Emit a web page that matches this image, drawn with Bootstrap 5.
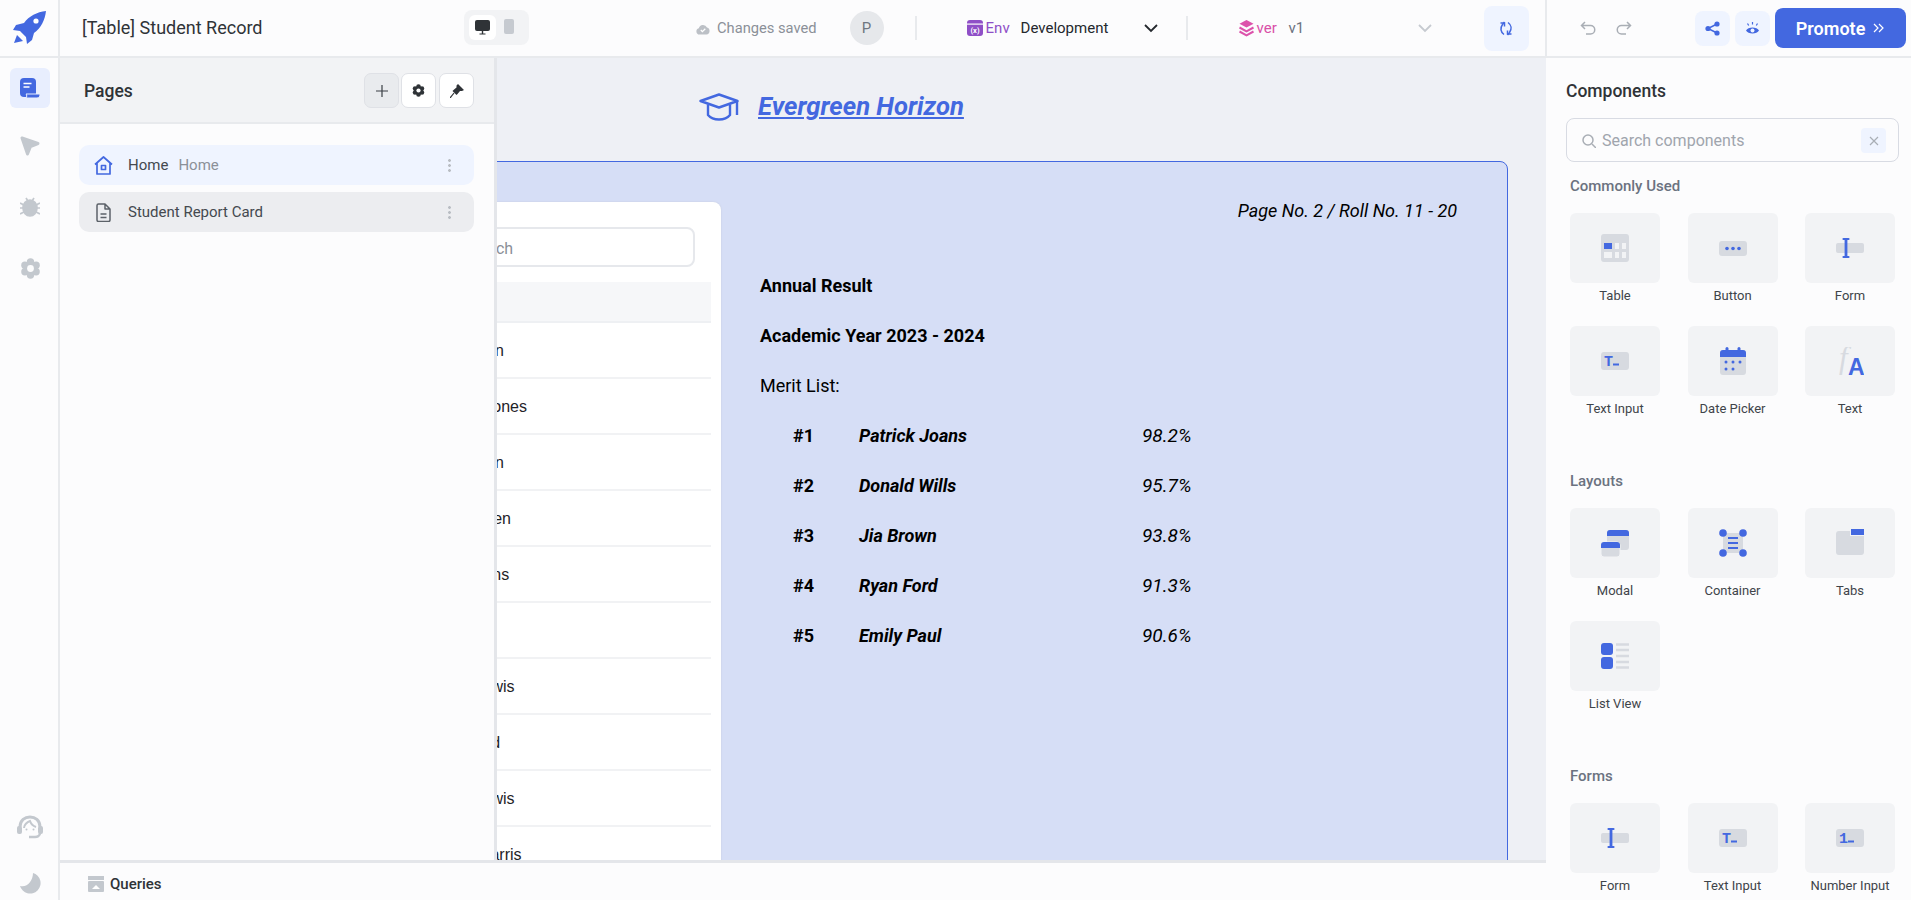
<!DOCTYPE html>
<html lang="en">
<head>
<meta charset="UTF-8">
<meta name="viewport" content="width=device-width, initial-scale=1.0">
<title>[Table] Student Record</title>
<link href="https://cdn.jsdelivr.net/npm/bootstrap@5.3.0/dist/css/bootstrap.min.css" rel="stylesheet">
<style>
body { font-family: Roboto, "Liberation Sans", sans-serif; background: #fcfcfd; color: #2f3337; height: 900px; overflow: hidden; }
.app-top { height: 58px; border-bottom: 2px solid #e8eaed; }
.logo-cell { width: 60px; border-right: 2px solid #e8eaed; padding: 11px 0 0 13px; }
.page-title { font-size: 18px; margin-left: 22px; width: 382px; padding-bottom: 2px; }
.device-toggle { width: 65px; height: 35px; background: #f2f3f5; border-radius: 8px; padding: 5px; margin-top: 10px; }
.device-on { width: 27px; height: 25px; background: #fff; border-radius: 6px; }
.top-tools { margin-left: 167px; }
.saved-text { font-size: 14.7px; color: #8b9098; margin-left: 7px; }
.avatar { width: 34px; height: 34px; border-radius: 50%; background: #e6e8eb; color: #6e7680; font-size: 15px; margin-left: 33px; }
.top-rule { width: 2px; height: 24px; background: #e8eaed; }
.rule-env { margin: 0 50px 0 31px; }
.rule-ver { margin: 0 51px 0 28px; }
.env-label { font-size: 15px; color: #8f4fc7; width: 35px; margin-left: 3px; }
.env-value { font-size: 15px; color: #24282d; width: 123px; }
.ver-label { font-size: 15px; color: #d94fa8; width: 32px; margin-left: 3px; }
.ver-value { font-size: 15px; color: #6b7280; width: 129px; }
.soft-btn { background: #eff4ff; border-radius: 8px; }
.sync-btn { width: 45px; height: 45px; margin-left: 52px; }
.action-tools { margin-left: 16px; border-left: 2px solid #e8eaed; padding-left: 33px; flex: 1; }
.redo-icon { margin-left: 20px; }
.share-btn { width: 35px; height: 35px; margin-left: 63px; }
.eye-btn { width: 35px; height: 35px; margin-left: 5px; }
.promote-btn { width: 131px; height: 40px; background: #4368e0; color: #fff; border-radius: 8px; font-size: 18px; font-weight: 600; margin-left: 5px; }
.app-main { height: 842px; }
.side-rail { width: 60px; border-right: 2px solid #e8eaed; padding-top: 10px; }
.rail-item { width: 40px; height: 40px; margin-left: 10px; border-radius: 6px; margin-bottom: 21px; }
.rail-on { background: #e8eefe; margin-bottom: 18px; }
.rail-help { margin-bottom: 16px; }
.rail-moon { margin-bottom: -3px; }
.mid-col { width: 1486px; position: relative; }
.canvas-area { height: 802px; background: #eef0f5; overflow: hidden; }
.brand-row { height: 103px; padding: 0 0 6px 639px; gap: 19px; }
.brand-name { font-size: 25.6px; font-weight: 700; font-style: italic; color: #4368e0; text-decoration: underline; }
.sheet { margin-left: 95px; width: 1353px; height: 900px; background: #d6def6; border: 1px solid #4368e0; border-radius: 8px 8px 0 0; padding: 40px 40px 0 40px; }
.table-card { width: 525px; height: 800px; background: #fff; border-radius: 8px; padding: 25px 10px 0 10px; box-shadow: 0 0 2px #c6cbdc; }
.table-search { margin: 0 16px 15px auto; height: 40px; width: 270px; border: 2px solid #e6e8ec; border-radius: 8px; font-size: 16px; color: #8a8f98; padding: 8px 10px 6px 37px; }
.rec-head { height: 41px; background: #f6f7f9; border-bottom: 2px solid #eef0f3; font-size: 14px; color: #6b7280; }
.rec-row { height: 56px; padding-top: 2px; border-bottom: 2px solid #f1f2f4; font-family: "Liberation Sans", sans-serif; font-size: 16px; color: #1f2328; white-space: nowrap; }
.rec-roll { width: 208px; padding-left: 12px; }
.result-col { padding: 0 0 0 39px; color: #000; font-size: 18px; }
.result-page { height: 59px; line-height: 17px; padding-right: 10px; font-style: italic; }
.result-line { height: 50px; line-height: 50px; }
.merit-rank { width: 66px; margin-left: 33px; font-weight: 700; }
.merit-name { width: 283px; font-weight: 700; font-style: italic; }
.merit-pct { font-style: italic; font-size: 19px; }
.pages-panel { position: absolute; left: 0; top: 0; width: 437px; height: 802px; background: #fcfcfd; border-right: 3px solid #e4e6ea; }
.panel-head { height: 66px; background: #f2f3f5; border-bottom: 2px solid #e8eaed; padding: 15px 20px 0 24px; }
.panel-name { font-size: 17.5px; font-weight: 500; padding-top: 5px; }
.mini-btn { width: 35px; height: 35px; background: #fff; border: 1px solid #dfe1e6; border-radius: 7px; }
.mini-plus { background: #e9ebee; }
.mini-gear { margin: 0 3px 0 2px; }
.page-item { height: 40px; width: 395px; margin: 0 0 7px 19px; border-radius: 10px; font-size: 15px; padding: 0 23px 0 15px; color: #44494f; }
.page-home { background: #eff4ff; margin-top: 21px; }
.page-report { background: #ecedf0; }
.page-text { margin-left: 15px; }
.page-slug { color: #8b9098; margin-left: 10px; }
.kebab { width: 3px; height: 15px; background: radial-gradient(circle, #b9bdc3 1.3px, transparent 1.5px) 0 0 / 3px 5px repeat-y; }
.query-bar { height: 40px; border-top: 3px solid #e4e6ea; padding: 5px 0 0 28px; font-size: 15px; font-weight: 500; }
.query-text { margin-left: 6px; }
.comp-panel { width: 365px; padding: 0 12px 0 20px; }
.comp-title { font-size: 17.5px; font-weight: 500; height: 60px; padding-top: 20px; }
.comp-search { height: 44px; border: 1px solid #d8dbe3; border-radius: 8px; padding: 1px 12px 0 15px; font-size: 16px; color: #a0a5ad; }
.search-text { margin-left: 6px; }
.clear-box { width: 25px; height: 25px; background: #eff4ff; border-radius: 4px; }
.comp-head { font-size: 15px; font-weight: 500; color: #6b7280; margin: 32px 0 0 4px; line-height: 20px; }
.comp-head-first { margin-top: 14px; }
.comp-grid { display: grid; grid-template-columns: repeat(3, 90px); column-gap: 27.5px; margin: 17px 0 0 4px; }
.comp-cell { height: 113px; text-align: center; font-size: 13px; color: #3f444a; }
.comp-tile { height: 70px; background: #f2f3f5; border-radius: 6px; margin-bottom: 5px; }
.comp-cell span { display: block; line-height: 16px; }
</style>
</head>
<body>
<!-- top bar -->
<div class="app-top d-flex">
    <div class="logo-cell">
        <svg width="33" height="33" viewBox="0 0 33 33"><path fill="#4368e0" d="M33 0C24 1 16 5 11 12L3 14L0 19L7 20L13 26L14 33L19 29L21 22C28 17 32 9 33 0Z"/><circle cx="23" cy="10" r="2.6" fill="#fff"/><path fill="#4368e0" d="M4 24L10 30L1 32Z"/></svg>
    </div>
    <div class="page-title align-self-center">[Table] Student Record</div>
    <div class="device-toggle d-flex">
        <div class="device-on d-flex align-items-center justify-content-center">
            <svg width="15" height="15" viewBox="0 0 15 15"><rect width="15" height="11" rx="2" fill="#2f3337"/><rect x="6.8" y="11" width="1.4" height="3" fill="#2f3337"/><rect x="4.5" y="13.5" width="6" height="1" fill="#2f3337"/></svg>
        </div>
        <svg class="ms-2 mt-1" width="10" height="15" viewBox="0 0 10 15"><rect width="10" height="15" rx="2" fill="#c6cad0"/></svg>
    </div>
    <div class="top-tools d-flex align-items-center">
        <svg width="14" height="13" viewBox="0 0 14 13"><path fill="#bcc0c6" d="M3.500 12.500A3.200 3.200 0 0 1 2.800 6.200 4.400 4.400 0 0 1 11 5.500 3.600 3.600 0 0 1 10.500 12.500Z"/><path d="M4.800 8l1.600 1.600L9.300 6.800" stroke="#fff" stroke-width="1.300" fill="none"/></svg>
        <span class="saved-text">Changes saved</span>
        <div class="avatar d-flex align-items-center justify-content-center">P</div>
        <div class="top-rule rule-env"></div>
        <svg width="16" height="16" viewBox="0 0 16 16"><rect width="16" height="16" rx="3" fill="#8f4fc7"/><rect y="3.500" width="16" height="1.200" fill="#fcfcfd"/><text x="8" y="13" font-size="7.500" font-weight="700" text-anchor="middle" fill="#fff" font-family="Roboto">(x)</text></svg>
        <span class="env-label">Env</span>
        <span class="env-value">Development</span>
        <svg width="14" height="9" viewBox="0 0 14 9"><path d="M1 1l6 6 6-6" stroke="#24282d" stroke-width="1.800" fill="none"/></svg>
        <div class="top-rule rule-ver"></div>
        <svg width="15" height="17" viewBox="0 0 15 17"><path fill="#dc52ab" d="M7.500 0l7 3.800-7 3.800-7-3.800Z"/><path d="M.5 7.500l7 3.800 7-3.800M.5 11.500l7 3.800 7-3.800" stroke="#dc52ab" stroke-width="2" fill="none"/></svg>
        <span class="ver-label">ver</span>
        <span class="ver-value">v1</span>
        <svg width="14" height="9" viewBox="0 0 14 9"><path d="M1 1l6 6 6-6" stroke="#c6cad0" stroke-width="1.800" fill="none"/></svg>
        <div class="soft-btn sync-btn d-flex align-items-center justify-content-center">
            <svg width="14" height="15" viewBox="0 0 14 15" fill="none" stroke="#4368e0" stroke-width="1.500"><path d="M5 13.500C1.500 11 1 7 3.500 3.500L5.500 1"/><path d="M9 1.500C12.500 4 13 8 10.500 11.500L8.500 14"/><path d="M1.500 2h4v3.500M12.500 13h-4V9.500"/></svg>
        </div>
    </div>
    <div class="action-tools d-flex align-items-center">
        <svg width="16" height="14" viewBox="0 0 16 14" fill="none" stroke="#a9aeb5" stroke-width="1.500"><path d="M5 1L1.500 4.500 5 8M1.500 4.500h9a4 4 0 0 1 0 8.500H6"/></svg>
        <svg class="redo-icon" width="16" height="14" viewBox="0 0 16 14" fill="none" stroke="#a9aeb5" stroke-width="1.500"><path d="M11 1l3.500 3.500L11 8M14.500 4.500h-9a4 4 0 0 0 0 8.500H10"/></svg>
        <div class="soft-btn share-btn d-flex align-items-center justify-content-center">
            <svg width="15" height="15" viewBox="0 0 15 15"><circle cx="12" cy="3" r="2.600" fill="#4368e0"/><circle cx="12" cy="12" r="2.600" fill="#4368e0"/><circle cx="3" cy="7.500" r="2.600" fill="#4368e0"/><path d="M12 3L3 7.500l9 4.500" stroke="#4368e0" stroke-width="1.500" fill="none"/></svg>
        </div>
        <div class="soft-btn eye-btn d-flex align-items-center justify-content-center">
            <svg width="15" height="15" viewBox="0 0 15 15"><path fill="#4368e0" d="M1 9.500C3 5.500 12 5.500 14 9.500 12 13.500 3 13.500 1 9.500Z"/><circle cx="7.500" cy="9.500" r="2" fill="#eff4ff"/><path d="M7.500 1v2.500M2.500 2.500l1.200 2M12.500 2.500l-1.200 2" stroke="#4368e0" stroke-width="1.200"/></svg>
        </div>
        <div class="promote-btn d-flex align-items-center justify-content-center gap-2">Promote
            <svg width="11" height="10" viewBox="0 0 11 10" fill="none" stroke="#fff" stroke-width="1.200"><path d="M1 1l4 4-4 4M6 1l4 4-4 4"/></svg>
        </div>
    </div>
</div>

<div class="app-main d-flex">
    <!-- left rail -->
    <div class="side-rail d-flex flex-column">
        <div class="rail-item rail-on d-flex align-items-center justify-content-center">
            <svg width="20" height="21" viewBox="0 0 20 21"><rect width="16" height="19" rx="4" fill="#4368e0"/><path d="M3.500 5.500h8M3.500 9h6" stroke="#fff" stroke-width="1.500"/><path d="M6 16h14c0 2.500-1 4-3 4H6c1-1 1-3 0-4Z" fill="#4368e0" stroke="#e8eefe"/></svg>
        </div>
        <div class="rail-item d-flex align-items-center justify-content-center">
            <svg width="20" height="20" viewBox="0 0 20 20"><path d="M2 2L18 7.500 10.500 10.500 7.500 18Z" fill="#c3c8ce" stroke="#c3c8ce" stroke-width="3" stroke-linejoin="round"/></svg>
        </div>
        <div class="rail-item d-flex align-items-center justify-content-center">
            <svg width="20" height="20" viewBox="0 0 20 20" stroke="#c3c8ce" stroke-width="1.700"><ellipse cx="10" cy="11" rx="7" ry="8" fill="#c3c8ce"/><path d="M6 1l2 3M14 1l-2 3M0 6l4 2M20 6l-4 2M0 11h4M20 11h-4M0 17l4-2M20 17l-4-2"/></svg>
        </div>
        <div class="rail-item d-flex align-items-center justify-content-center">
            <svg width="21" height="21" viewBox="-10.500 -10.500 21 21" fill="#c3c8ce"><circle r="7"/><circle cy="-6.500" r="3.700"/><circle cy="6.500" r="3.700"/><circle cx="5.600" cy="-3.200" r="3.700"/><circle cx="-5.600" cy="-3.200" r="3.700"/><circle cx="5.600" cy="3.200" r="3.700"/><circle cx="-5.600" cy="3.200" r="3.700"/><circle r="3.400" fill="#fcfcfd"/></svg>
        </div>
        <div class="rail-item rail-help d-flex align-items-center justify-content-center mt-auto">
            <svg width="26" height="24" viewBox="0 0 26 24" fill="none"><path d="M3 12C3 5 8 2 13 2s10 3 10 10" stroke="#c3c8ce" stroke-width="3"/><path d="M7 13c0-3 3-6 6-7 1 3 3 5 6 6" stroke="#c3c8ce" stroke-width="2"/><rect y="11" width="5" height="8" rx="2" fill="#c3c8ce"/><rect x="21" y="11" width="5" height="8" rx="2" fill="#c3c8ce"/><path d="M23 18c0 3-3 4-5 4h-6" stroke="#c3c8ce" stroke-width="2.500"/><circle cx="9.500" cy="14.500" r="1" fill="#c3c8ce"/><circle cx="16.500" cy="14.500" r="1" fill="#c3c8ce"/></svg>
        </div>
        <div class="rail-item rail-moon d-flex align-items-center justify-content-center">
            <svg width="22" height="22" viewBox="0 0 22 22"><path fill="#c3c8ce" d="M14 1A10.500 10.500 0 1 1 1 14C8 16 14 9 14 1Z"/></svg>
        </div>
    </div>

    <div class="mid-col">
        <!-- canvas -->
        <div class="canvas-area">
            <div class="brand-row d-flex align-items-center">
                <svg width="40" height="28" viewBox="0 0 40 28" fill="none" stroke="#4368e0" stroke-width="2.400" stroke-linejoin="round"><path d="M1.500 8L20 1.500 38.500 8 20 14.500Z"/><path d="M9 11.500V22c5 6 17 6 22 0V11.500"/><path d="M38 8v14"/></svg>
                <span class="brand-name">Evergreen Horizon</span>
            </div>
            <div class="sheet d-flex">
                <div class="table-card flex-shrink-0">
                    <div class="table-search">Search</div>
                    <div class="rec-head d-flex align-items-center"><div class="rec-roll">Roll No.</div><div>Name</div></div>
                    <div class="rec-row d-flex align-items-center"><div class="rec-roll">11</div><div>David Martin</div></div>
                    <div class="rec-row d-flex align-items-center"><div class="rec-roll">12</div><div>Jonathan Jones</div></div>
                    <div class="rec-row d-flex align-items-center"><div class="rec-roll">13</div><div>Maria Brown</div></div>
                    <div class="rec-row d-flex align-items-center"><div class="rec-roll">14</div><div>Robert Green</div></div>
                    <div class="rec-row d-flex align-items-center"><div class="rec-roll">15</div><div>Henry Collins</div></div>
                    <div class="rec-row d-flex align-items-center"><div class="rec-roll">16</div><div>Mia Clark</div></div>
                    <div class="rec-row d-flex align-items-center"><div class="rec-roll">17</div><div>Michael Lewis</div></div>
                    <div class="rec-row d-flex align-items-center"><div class="rec-roll">18</div><div>Patrick Ford</div></div>
                    <div class="rec-row d-flex align-items-center"><div class="rec-roll">19</div><div>Charles Lewis</div></div>
                    <div class="rec-row d-flex align-items-center"><div class="rec-roll">20</div><div>Matthew Harris</div></div>
                </div>
                <div class="result-col flex-grow-1">
                    <div class="result-page text-end">Page No. 2 / Roll No. 11 - 20</div>
                    <div class="result-line fw-bold">Annual Result</div>
                    <div class="result-line fw-bold">Academic Year 2023 - 2024</div>
                    <div class="result-line">Merit List:</div>
                    <div class="result-line d-flex"><div class="merit-rank">#1</div><div class="merit-name">Patrick Joans</div><div class="merit-pct">98.2%</div></div>
                    <div class="result-line d-flex"><div class="merit-rank">#2</div><div class="merit-name">Donald Wills</div><div class="merit-pct">95.7%</div></div>
                    <div class="result-line d-flex"><div class="merit-rank">#3</div><div class="merit-name">Jia Brown</div><div class="merit-pct">93.8%</div></div>
                    <div class="result-line d-flex"><div class="merit-rank">#4</div><div class="merit-name">Ryan Ford</div><div class="merit-pct">91.3%</div></div>
                    <div class="result-line d-flex"><div class="merit-rank">#5</div><div class="merit-name">Emily Paul</div><div class="merit-pct">90.6%</div></div>
                </div>
            </div>
        </div>

        <!-- pages panel lies over the canvas -->
        <div class="pages-panel">
            <div class="panel-head d-flex">
                <div class="panel-name flex-grow-1">Pages</div>
                <div class="mini-btn mini-plus d-flex align-items-center justify-content-center"><svg width="12" height="12" viewBox="0 0 12 12"><path d="M6 0v12M0 6h12" stroke="#3a3f45" stroke-width="1.200"/></svg></div>
                <div class="mini-btn mini-gear d-flex align-items-center justify-content-center"><svg width="13" height="13" viewBox="-10.500 -10.500 21 21" fill="#2f3337"><circle r="7"/><circle cy="-6.500" r="3.700"/><circle cy="6.500" r="3.700"/><circle cx="5.600" cy="-3.200" r="3.700"/><circle cx="-5.600" cy="-3.200" r="3.700"/><circle cx="5.600" cy="3.200" r="3.700"/><circle cx="-5.600" cy="3.200" r="3.700"/><circle r="3.400" fill="#fff"/></svg></div>
                <div class="mini-btn d-flex align-items-center justify-content-center"><svg width="14" height="14" viewBox="0 0 14 14"><path fill="#2f3337" d="M8 0l6 6-2 1-2 0-2.500 3-1 1-4-4 1-1 3-2.500 0-2Z"/><path d="M4 9L0 14" stroke="#2f3337" stroke-width="1.200"/></svg></div>
            </div>
            <div class="page-item page-home d-flex align-items-center">
                <svg width="19" height="19" viewBox="0 0 19 19" fill="none" stroke="#4368e0" stroke-width="1.700" stroke-linejoin="round"><path d="M1 8.500L9.500 1 18 8.500M3 7v11h13V7"/><rect x="7.500" y="9.500" width="4" height="4"/></svg>
                <span class="page-text">Home</span><span class="page-slug">Home</span>
                <div class="kebab ms-auto"></div>
            </div>
            <div class="page-item page-report d-flex align-items-center">
                <svg width="19" height="19" viewBox="0 0 19 19" fill="none" stroke="#5c6269" stroke-width="1.500" stroke-linejoin="round"><path d="M3 2.500a1.500 1.500 0 0 1 1.500-1.500H11l5 5v11a1.500 1.500 0 0 1-1.500 1.500h-10A1.500 1.500 0 0 1 3 17ZM11 1v5h5M6.500 11h6M6.500 14.500h6"/></svg>
                <span class="page-text">Student Report Card</span>
                <div class="kebab ms-auto"></div>
            </div>
        </div>

        <div class="query-bar d-flex align-items-center">
            <svg width="16" height="16" viewBox="0 0 16 16"><rect width="16" height="4" fill="#c3c8ce"/><rect y="5" width="16" height="11" rx="1" fill="#c3c8ce"/><path d="M8 9l4 4H4Z" fill="#fff"/></svg>
            <span class="query-text">Queries</span>
        </div>
    </div>

    <!-- components -->
    <div class="comp-panel">
        <div class="comp-title">Components</div>
        <div class="comp-search d-flex align-items-center">
            <svg width="14" height="14" viewBox="0 0 14 14" fill="none" stroke="#a9aeb5" stroke-width="1.500"><circle cx="6" cy="6" r="5"/><path d="M10 10l4 4"/></svg>
            <span class="search-text flex-grow-1">Search components</span>
            <div class="clear-box d-flex align-items-center justify-content-center"><svg width="10" height="10" viewBox="0 0 10 10"><path d="M1 1l8 8M9 1l-8 8" stroke="#a9aeb5" stroke-width="1.200"/></svg></div>
        </div>
        <div class="comp-head comp-head-first">Commonly Used</div>
        <div class="comp-grid">
            <div class="comp-cell"><div class="comp-tile d-flex align-items-center justify-content-center">
                <svg width="28" height="28" viewBox="0 0 28 28"><rect width="28" height="28" rx="3" fill="#d7dae0"/><rect x="3" y="9" width="8" height="6" fill="#4368e0"/><path d="M14 9h4v6h-4ZM21 9h4v6h-4ZM3 18h8v6H3ZM14 18h4v6h-4ZM21 18h4v6h-4Z" fill="#f2f3f5"/></svg>
            </div><span>Table</span></div>
            <div class="comp-cell"><div class="comp-tile d-flex align-items-center justify-content-center">
                <svg width="28" height="28" viewBox="0 0 28 28"><rect y="7" width="28" height="15" rx="3" fill="#d7dae0"/><circle cx="8" cy="14.500" r="1.800" fill="#4368e0"/><circle cx="14" cy="14.500" r="1.800" fill="#4368e0"/><circle cx="20" cy="14.500" r="1.800" fill="#4368e0"/></svg>
            </div><span>Button</span></div>
            <div class="comp-cell"><div class="comp-tile d-flex align-items-center justify-content-center">
                <svg width="28" height="28" viewBox="0 0 28 28"><rect y="9" width="28" height="10" rx="2" fill="#d7dae0"/><path d="M10 5v18" stroke="#4368e0" stroke-width="2.800"/><path d="M7.500 5h5M7.500 23h5" stroke="#4368e0" stroke-width="2.200" stroke-linecap="round"/></svg>
            </div><span>Form</span></div>
            <div class="comp-cell"><div class="comp-tile d-flex align-items-center justify-content-center">
                <svg width="28" height="28" viewBox="0 0 28 28"><rect y="5" width="28" height="18" rx="3" fill="#d7dae0"/><text x="3" y="19" font-size="15" font-weight="700" fill="#4368e0" font-family="Liberation Mono">T</text><rect x="12" y="16.500" width="6" height="2" fill="#4368e0"/></svg>
            </div><span>Text Input</span></div>
            <div class="comp-cell"><div class="comp-tile d-flex align-items-center justify-content-center">
                <svg width="26" height="28" viewBox="0 0 26 28"><rect y="3" width="26" height="25" rx="3" fill="#d7dae0"/><path d="M0 10V6a3 3 0 0 1 3-3h20a3 3 0 0 1 3 3v4Z" fill="#4368e0"/><rect x="5.500" y="0" width="3" height="5" rx="1.500" fill="#4368e0"/><rect x="17.500" y="0" width="3" height="5" rx="1.500" fill="#4368e0"/><g fill="#4368e0"><circle cx="6" cy="15" r="1.500"/><circle cx="13" cy="15" r="1.500"/><circle cx="20" cy="15" r="1.500"/><circle cx="6" cy="22" r="1.500"/><circle cx="13" cy="22" r="1.500"/></g></svg>
            </div><span>Date Picker</span></div>
            <div class="comp-cell"><div class="comp-tile d-flex align-items-center justify-content-center">
                <svg width="28" height="28" viewBox="0 0 28 28"><text x="3" y="21" font-size="31" font-style="italic" fill="#d7dae0" font-family="Liberation Serif">f</text><text x="12" y="28" font-size="23" font-weight="700" fill="#4368e0" font-family="Liberation Sans">A</text></svg>
            </div><span>Text</span></div>
        </div>
        <div class="comp-head">Layouts</div>
        <div class="comp-grid">
            <div class="comp-cell"><div class="comp-tile d-flex align-items-center justify-content-center">
                <svg width="28" height="28" viewBox="0 0 28 28"><rect x="6" y="1" width="22" height="20" rx="3" fill="#d7dae0"/><path d="M6 7V4a3 3 0 0 1 3-3h16a3 3 0 0 1 3 3v3Z" fill="#4368e0"/><rect y="13" width="19" height="15" rx="3" fill="#d7dae0" stroke="#f2f3f5"/><path d="M0 19v-3a3 3 0 0 1 3-3h13a3 3 0 0 1 3 3v3Z" fill="#4368e0"/></svg>
            </div><span>Modal</span></div>
            <div class="comp-cell"><div class="comp-tile d-flex align-items-center justify-content-center">
                <svg width="28" height="28" viewBox="0 0 28 28"><rect x="4" y="4" width="20" height="20" rx="2" fill="#d7dae0"/><g fill="#4368e0"><circle cx="4" cy="4" r="3.800"/><circle cx="24" cy="4" r="3.800"/><circle cx="4" cy="24" r="3.800"/><circle cx="24" cy="24" r="3.800"/></g><path d="M9 9h10M9 14h10M9 19h10" stroke="#4368e0" stroke-width="2"/></svg>
            </div><span>Container</span></div>
            <div class="comp-cell"><div class="comp-tile d-flex align-items-center justify-content-center">
                <svg width="28" height="28" viewBox="0 0 28 28"><rect y="2" width="28" height="24" rx="3" fill="#d7dae0"/><rect x="14" y="0" width="14" height="7" fill="#f2f3f5"/><rect x="15" y="0" width="13" height="6" fill="#4368e0"/></svg>
            </div><span>Tabs</span></div>
            <div class="comp-cell"><div class="comp-tile d-flex align-items-center justify-content-center">
                <svg width="28" height="28" viewBox="0 0 28 28"><rect y="1" width="12" height="12" rx="3" fill="#4368e0"/><rect y="15" width="12" height="12" rx="3" fill="#4368e0"/><path d="M15 2.500h13M15 8h13M15 14h13M15 20h13M15 25.500h13" stroke="#d7dae0" stroke-width="2.500"/></svg>
            </div><span>List View</span></div>
        </div>
        <div class="comp-head">Forms</div>
        <div class="comp-grid">
            <div class="comp-cell"><div class="comp-tile d-flex align-items-center justify-content-center">
                <svg width="28" height="28" viewBox="0 0 28 28"><rect y="9" width="28" height="10" rx="2" fill="#d7dae0"/><path d="M10 5v18" stroke="#4368e0" stroke-width="2.800"/><path d="M7.500 5h5M7.500 23h5" stroke="#4368e0" stroke-width="2.200" stroke-linecap="round"/></svg>
            </div><span>Form</span></div>
            <div class="comp-cell"><div class="comp-tile d-flex align-items-center justify-content-center">
                <svg width="28" height="28" viewBox="0 0 28 28"><rect y="5" width="28" height="18" rx="3" fill="#d7dae0"/><text x="3" y="19" font-size="15" font-weight="700" fill="#4368e0" font-family="Liberation Mono">T</text><rect x="12" y="16.500" width="6" height="2" fill="#4368e0"/></svg>
            </div><span>Text Input</span></div>
            <div class="comp-cell"><div class="comp-tile d-flex align-items-center justify-content-center">
                <svg width="28" height="28" viewBox="0 0 28 28"><rect y="5" width="28" height="18" rx="3" fill="#d7dae0"/><text x="3" y="19" font-size="15" font-weight="700" fill="#4368e0" font-family="Liberation Mono">1</text><rect x="12" y="16.500" width="6" height="2" fill="#4368e0"/></svg>
            </div><span>Number Input</span></div>
        </div>
    </div>
</div>
<script src="https://cdn.jsdelivr.net/npm/bootstrap@5.3.0/dist/js/bootstrap.bundle.min.js"></script>
</body>
</html>
